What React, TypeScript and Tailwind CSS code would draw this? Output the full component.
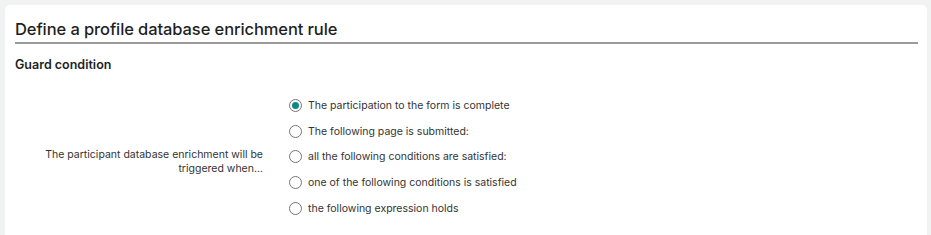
import React from "react";

const options = [
  "The participation to the form is complete",
  "The following page is submitted:",
  "all the following conditions are satisfied:",
  "one of the following conditions is satisfied",
  "the following expression holds",
];

function Radio({ checked }: { checked: boolean }) {
  return (
    <span className="flex h-[13px] w-[13px] shrink-0 items-center justify-center rounded-full border border-[#767676] bg-white">
      {checked && <span className="h-[7px] w-[7px] rounded-full bg-[#0b8a84]" />}
    </span>
  );
}

export default function App() {
  return (
    <div className="h-[235px] w-[931px] overflow-hidden bg-[#f1f3f2] pl-[5px] pr-[4px] pt-[5px] font-['Inter',sans-serif] text-[#1f1f1f]">
      <div className="h-[240px] rounded-t-[5px] bg-white px-[10px] pr-[9px]">
        <div className="pt-[12px] text-[16.5px] font-medium leading-[24px] tracking-[-0.1px]">
          Define a profile database enrichment rule
        </div>
        <div className="mt-[1px] h-[2px] bg-[#9a9a9a]" />
        <div className="mt-[13px] text-[12.5px] font-semibold leading-[16px]">Guard condition</div>
        <div className="mt-[26px] flex items-center">
          <div className="w-[248px] pt-[10px] text-right text-[10.5px] leading-[14px] text-[#333]">
            The participant database enrichment will be triggered when...
          </div>
          <div className="ml-[26px] flex flex-col gap-[12.7px]">
            {options.map((o, i) => (
              <label key={o} className="flex h-[13px] items-center gap-[6px] text-[10.5px] leading-[13px] text-[#333]">
                <Radio checked={i === 0} />
                <span>{o}</span>
              </label>
            ))}
          </div>
        </div>
      </div>
    </div>
  );
}
